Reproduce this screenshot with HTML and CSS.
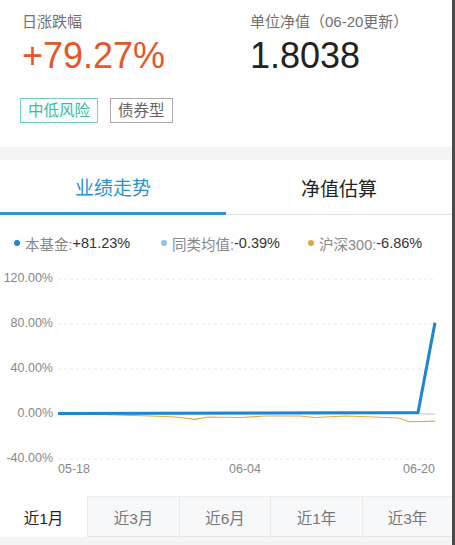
FILE: index.html
```html
<!DOCTYPE html>
<html lang="zh-CN">
<head>
<meta charset="utf-8">
<link rel="stylesheet" href="styles.css">
</head>
<body>
<div class="screen">
  <div class="main">
    <section class="header">
      <div class="stat">
        <div class="label">日涨跌幅</div>
        <div class="value up">+79.27%</div>
      </div>
      <div class="stat">
        <div class="label">单位净值（06-20更新）</div>
        <div class="value">1.8038</div>
      </div>
    </section>
    <div class="tags">
      <span class="tag risk">中低风险</span>
      <span class="tag type">债券型</span>
    </div>
    <div class="band"></div>
    <nav class="tabs">
      <div class="tab active">业绩走势</div>
      <div class="tab">净值估算</div>
    </nav>
    <div class="legend">
      <div class="item"><i class="dot fund"></i><span class="k">本基金:</span><span class="v">+81.23%</span></div>
      <div class="item"><i class="dot avg"></i><span class="k">同类均值:</span><span class="v">-0.39%</span></div>
      <div class="item"><i class="dot hs"></i><span class="k">沪深300:</span><span class="v">-6.86%</span></div>
    </div>
    <svg class="chart" width="452" height="230" viewBox="0 0 452 230">
      <g class="grid">
        <line x1="58" y1="16" x2="435" y2="16"/>
        <line x1="58" y1="61" x2="435" y2="61"/>
        <line x1="58" y1="106" x2="435" y2="106"/>
        <line x1="58" y1="196" x2="435" y2="196"/>
      </g>
      <g class="ylab">
        <text x="53" y="16">120.00%</text>
        <text x="53" y="61">80.00%</text>
        <text x="53" y="106">40.00%</text>
        <text x="53" y="151">0.00%</text>
        <text x="53" y="196">-40.00%</text>
      </g>
      <g class="xlab">
        <text x="58" y="207" class="start">05-18</text>
        <text x="245" y="207" class="mid">06-04</text>
        <text x="435" y="207" class="end">06-20</text>
      </g>
      <line class="avg-line" x1="58" y1="151" x2="435" y2="151"/>
      <polyline class="hs-line" points="58,151.3 100,151.5 150,153 175,154 195,156.3 208,154 240,154.5 265,153 300,153 315,154.5 345,153 375,154 398,155 410,158.7 420,158.5 435,158.2"/>
      <polyline class="fund-line" points="58,150.6 418,149.6 435,59.6"/>
    </svg>
    <div class="periods">
      <div class="period active">近1月</div>
      <div class="period">近3月</div>
      <div class="period">近6月</div>
      <div class="period">近1年</div>
      <div class="period">近3年</div>
    </div>
    <div class="foot"></div>
  </div>
  <div class="edge"></div>
</div>
</body>
</html>
```

FILE: styles.css
```css
html, body {
  margin: 0;
  padding: 0;
  background: #fff;
}

body {
  font-family: "Liberation Sans", "Noto Sans CJK SC", sans-serif;
}

.screen {
  display: flex;
  width: 455px;
  height: 545px;
  overflow: hidden;
}

.main {
  width: 452px;
  flex: none;
  background: #fff;
}

.edge {
  flex: 1;
  background: #4a4a4a;
}

.header {
  display: grid;
  grid-template-columns: 228px 1fr;
  padding: 12px 0 0 22px;
}

.label {
  font-size: 15px;
  line-height: 20px;
  color: #6f6f6f;
}

.value {
  font-size: 36px;
  line-height: 40px;
  margin-top: 4px;
  color: #222;
}

.value.up {
  color: #e5572b;
}

.tags {
  display: flex;
  gap: 12px;
  padding: 22px 0 0 20px;
}

.tag {
  font-size: 15.5px;
  line-height: 23px;
  padding: 0 7px;
  border: 1px solid;
}

.risk {
  color: #38bc9f;
  border-color: #72d4c0;
}

.type {
  color: #666;
  border-color: #aaa;
}

.band {
  height: 13px;
  margin-top: 24px;
  background: #f4f4f4;
}

.tabs {
  display: flex;
  height: 55px;
}

.tab {
  flex: 1;
  display: flex;
  align-items: center;
  justify-content: center;
  font-size: 19px;
  color: #222;
  border-bottom: 1px solid #e3e3e3;
}

.tab.active {
  color: #2b93cf;
  border-bottom: 3px solid #2b93cf;
}

.legend {
  display: grid;
  grid-template-columns: 147px 147px auto;
  align-items: center;
  height: 40px;
  padding: 8px 0 0 14px;
  font-size: 14.5px;
}

.item {
  display: flex;
  align-items: center;
}

.dot {
  width: 6px;
  height: 6px;
  border-radius: 50%;
  margin-right: 5px;
}

.dot.fund { background: #1a88d8; }
.dot.avg { background: #8cc4ec; }
.dot.hs { background: #e8a23a; }

.k { color: #888; }
.v { color: #333; }

.chart {
  display: block;
}

.grid line {
  stroke: #e8e8e8;
  stroke-width: 1;
  stroke-dasharray: 3 3;
}

.ylab text,
.xlab text {
  font-family: "Liberation Sans", sans-serif;
  font-size: 12.5px;
  fill: #888;
  dominant-baseline: middle;
}

.ylab text { text-anchor: end; }
.xlab .start { text-anchor: start; }
.xlab .mid { text-anchor: middle; }
.xlab .end { text-anchor: end; }

.avg-line {
  stroke: #9fcdee;
  stroke-width: 1;
}

.hs-line {
  fill: none;
  stroke: #e8a63c;
  stroke-width: 1.2;
}

.fund-line {
  fill: none;
  stroke: #1d86d3;
  stroke-width: 3;
  stroke-linejoin: round;
}

.periods {
  display: grid;
  grid-template-columns: 87px 92px 91px 92px 90px;
  height: 41px;
  margin-top: 3px;
}

.period {
  display: flex;
  align-items: center;
  justify-content: center;
  font-size: 15.5px;
  color: #777;
  background: #f7f8fa;
  border-left: 1px solid #e9e9e9;
  border-top: 1px solid #ededed;
  border-bottom: 1px solid #e6e6e6;
}

.period.active {
  background: #fff;
  color: #222;
  border: none;
}

.foot {
  height: 10px;
  background: #f4f4f4;
}
```
